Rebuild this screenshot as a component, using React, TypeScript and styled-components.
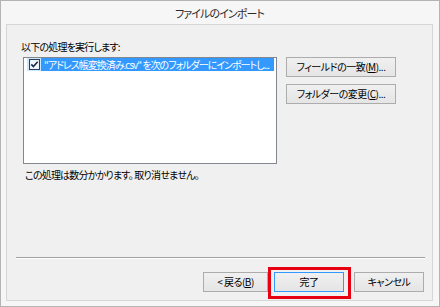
import styled, { createGlobalStyle } from 'styled-components';

const GlobalStyle = createGlobalStyle`
  html, body {
    margin: 0;
    padding: 0;
    background: #fff;
  }
  body {
    font-family: "Noto Sans CJK JP", "Noto Sans", sans-serif;
    font-feature-settings: "palt";
  }
`;

const Window = styled.div`
  width: 440px;
  height: 307px;
  box-sizing: border-box;
  border: 1px solid #b4b4b4;
  background: #f6f6f6;
  padding: 0 6px 5px 5px;
  display: flex;
  flex-direction: column;
`;

const TitleBar = styled.div`
  height: 23px;
  display: flex;
  align-items: center;
  justify-content: center;
  font-size: 11px;
  letter-spacing: -0.9px;
  color: #2b2b2b;
`;

const Panel = styled.div`
  flex: 1;
  border: 1px solid #d6d6d6;
  background: #f0f0f0;
  display: flex;
  flex-direction: column;
  font-size: 10px;
  letter-spacing: -0.8px;
  color: #000;
`;

const Label = styled.div`
  margin: 14px 0 0 14px;
  line-height: 16px;
`;

const ListRow = styled.div`
  display: flex;
  align-items: flex-start;
  margin: 2px 0 0 16px;
`;

const ListBox = styled.div`
  width: 254px;
  height: 107px;
  box-sizing: border-box;
  border: 1px solid #828790;
  background: #fff;
  padding: 0 2px 0 3px;
`;

const Item = styled.div`
  display: flex;
  height: 13px;
  line-height: 13px;
`;

const CheckCell = styled.div`
  width: 14px;
  flex: none;
  background: #cce8ff;
  display: flex;
  align-items: center;
  justify-content: center;
`;

const ItemText = styled.div`
  flex: 1;
  min-width: 0;
  background: #3399ff;
  color: #fff;
  padding: 0 2px 0 3px;
  letter-spacing: -1px;
  white-space: nowrap;
  overflow: hidden;
`;

const SideButtons = styled.div`
  display: flex;
  flex-direction: column;
  gap: 7px;
  margin-left: 9px;
`;

const Button = styled.button<{ $w: number; $focused?: boolean }>`
  width: ${(p) => p.$w}px;
  height: 20px;
  box-sizing: border-box;
  padding: 0;
  border: 1px solid ${(p) => (p.$focused ? '#3399ff' : '#acacac')};
  background: linear-gradient(#f0f0f0, #e5e5e5);
  font-family: inherit;
  font-feature-settings: "palt";
  font-size: 10px;
  letter-spacing: -0.5px;
  line-height: 18px;
  color: #000;
  display: flex;
  align-items: center;
  justify-content: center;
`;

const Key = styled.span`
  text-decoration: underline;
`;

const Note = styled.div`
  margin: 3px 0 0 18px;
  line-height: 16px;
`;

const Spacer = styled.div`
  flex: 1;
`;

const Separator = styled.div`
  margin: 0 7px 0 9px;
  border-top: 1px solid #a0a0a0;
  border-bottom: 1px solid #fff;
`;

const Footer = styled.div`
  display: flex;
  justify-content: flex-end;
  align-items: center;
  margin-top: 13px;
  padding: 0 8px 8px 0;
`;

const Highlight = styled.div`
  position: relative;
  margin: 0 10px 0 6px;

  &::after {
    content: '';
    position: absolute;
    top: -5px;
    left: -6px;
    right: -7px;
    bottom: -7px;
    border: 3px solid #e60012;
    pointer-events: none;
  }
`;

const CheckBox = () => (
  <svg width="11" height="11" viewBox="0 0 11 11">
    <rect x="0.5" y="0.5" width="10" height="10" fill="#dfeaf6" stroke="#2d3e58" />
    <rect x="1.5" y="1.5" width="8" height="8" fill="#f4f8fc" stroke="none" />
    <path d="M2.3 5.4 L4.4 7.6 L8.7 2.8" fill="none" stroke="#1b2a44" strokeWidth="1.6" />
  </svg>
);

export default function App() {
  return (
    <>
      <GlobalStyle />
      <Window>
        <TitleBar>ファイルのインポート</TitleBar>
        <Panel>
          <Label>以下の処理を実行します:</Label>
          <ListRow>
            <ListBox>
              <Item>
                <CheckCell>
                  <CheckBox />
                </CheckCell>
                <ItemText>"アドレス帳変換済み.csv" を次のフォルダーにインポートし...</ItemText>
              </Item>
            </ListBox>
            <SideButtons>
              <Button $w={110}>
                フィールドの一致(<Key>M</Key>)...
              </Button>
              <Button $w={110}>
                フォルダーの変更(<Key>C</Key>)...
              </Button>
            </SideButtons>
          </ListRow>
          <Note>この処理は数分かかります。 取り消せません。</Note>
          <Spacer />
          <Separator />
          <Footer>
            <Button $w={65}>
              &lt; 戻る(<Key>B</Key>)
            </Button>
            <Highlight>
              <Button $w={70} $focused>
                完了
              </Button>
            </Highlight>
            <Button $w={70}>キャンセル</Button>
          </Footer>
        </Panel>
      </Window>
    </>
  );
}
